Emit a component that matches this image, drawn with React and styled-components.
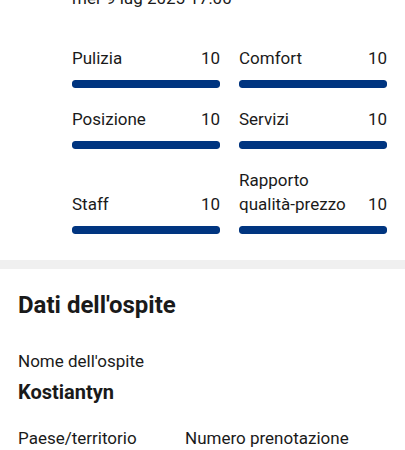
import React from 'react';
import styled, { createGlobalStyle } from 'styled-components';

const GlobalStyle = createGlobalStyle`
  html, body {
    margin: 0;
    padding: 0;
    background: #fff;
    overflow: hidden;
  }
  body {
    font-family: Roboto, "Liberation Sans", Arial, sans-serif;
    color: #1a1a1a;
  }
`;

const Page = styled.div`
  width: 405px;
  height: 450px;
  overflow: hidden;
  background: #fff;
`;

const ReviewSection = styled.section`
  padding: 0 18px 0 72px;
`;

const DateLine = styled.div`
  margin-top: -14px;
  font-size: 17px;
  line-height: 24px;
`;

const ScoreGrid = styled.div`
  display: grid;
  grid-template-columns: 148px 148px;
  column-gap: 19px;
  row-gap: 19px;
  margin-top: 36px;
`;

const ScoreCell = styled.div`
  display: flex;
  flex-direction: column;
  justify-content: flex-end;
`;

const LabelRow = styled.div`
  display: flex;
  justify-content: space-between;
  align-items: flex-end;
  gap: 8px;
  font-size: 17px;
  line-height: 24px;
`;

const Label = styled.span`
  flex: 1;
`;

const Score = styled.span`
  flex: none;
`;

const Bar = styled.div`
  margin-top: 10px;
  height: 8px;
  border-radius: 3px;
  background: #e7e7e7;
  overflow: hidden;
`;

const BarFill = styled.div`
  height: 100%;
  background: #003580;
  border-radius: 3px;
`;

const Divider = styled.div`
  margin-top: 26px;
  height: 9px;
  background: #f0f0f0;
`;

const GuestSection = styled.section`
  padding: 22px 18px 0;
`;

const Title = styled.h2`
  margin: 0;
  font-size: 24px;
  line-height: 28px;
  font-weight: 700;
`;

const FieldLabel = styled.div`
  margin-top: ${p => p.gap || 0}px;
  font-size: 17px;
  line-height: 24px;
`;

const FieldValue = styled.div`
  margin-top: 7px;
  font-size: 20px;
  line-height: 24px;
  font-weight: 700;
`;

const FieldRow = styled.div`
  display: grid;
  grid-template-columns: 167px 1fr;
  margin-top: 22px;
`;

const scores = [
  { label: 'Pulizia', value: 10 },
  { label: 'Comfort', value: 10 },
  { label: 'Posizione', value: 10 },
  { label: 'Servizi', value: 10 },
  { label: 'Staff', value: 10 },
  { label: 'Rapporto qualità-prezzo', value: 10 },
];

export default function App() {
  return (
    <Page>
      <GlobalStyle />
      <ReviewSection>
        <DateLine>mer 9 lug 2025 17:00</DateLine>
        <ScoreGrid>
          {scores.map(s => (
            <ScoreCell key={s.label}>
              <LabelRow>
                <Label>{s.label}</Label>
                <Score>{s.value}</Score>
              </LabelRow>
              <Bar>
                <BarFill style={{ width: `${s.value * 10}%` }} />
              </Bar>
            </ScoreCell>
          ))}
        </ScoreGrid>
      </ReviewSection>
      <Divider />
      <GuestSection>
        <Title>Dati dell'ospite</Title>
        <FieldLabel gap={30}>Nome dell'ospite</FieldLabel>
        <FieldValue>Kostiantyn</FieldValue>
        <FieldRow>
          <FieldLabel>Paese/territorio</FieldLabel>
          <FieldLabel>Numero prenotazione</FieldLabel>
        </FieldRow>
      </GuestSection>
    </Page>
  );
}
